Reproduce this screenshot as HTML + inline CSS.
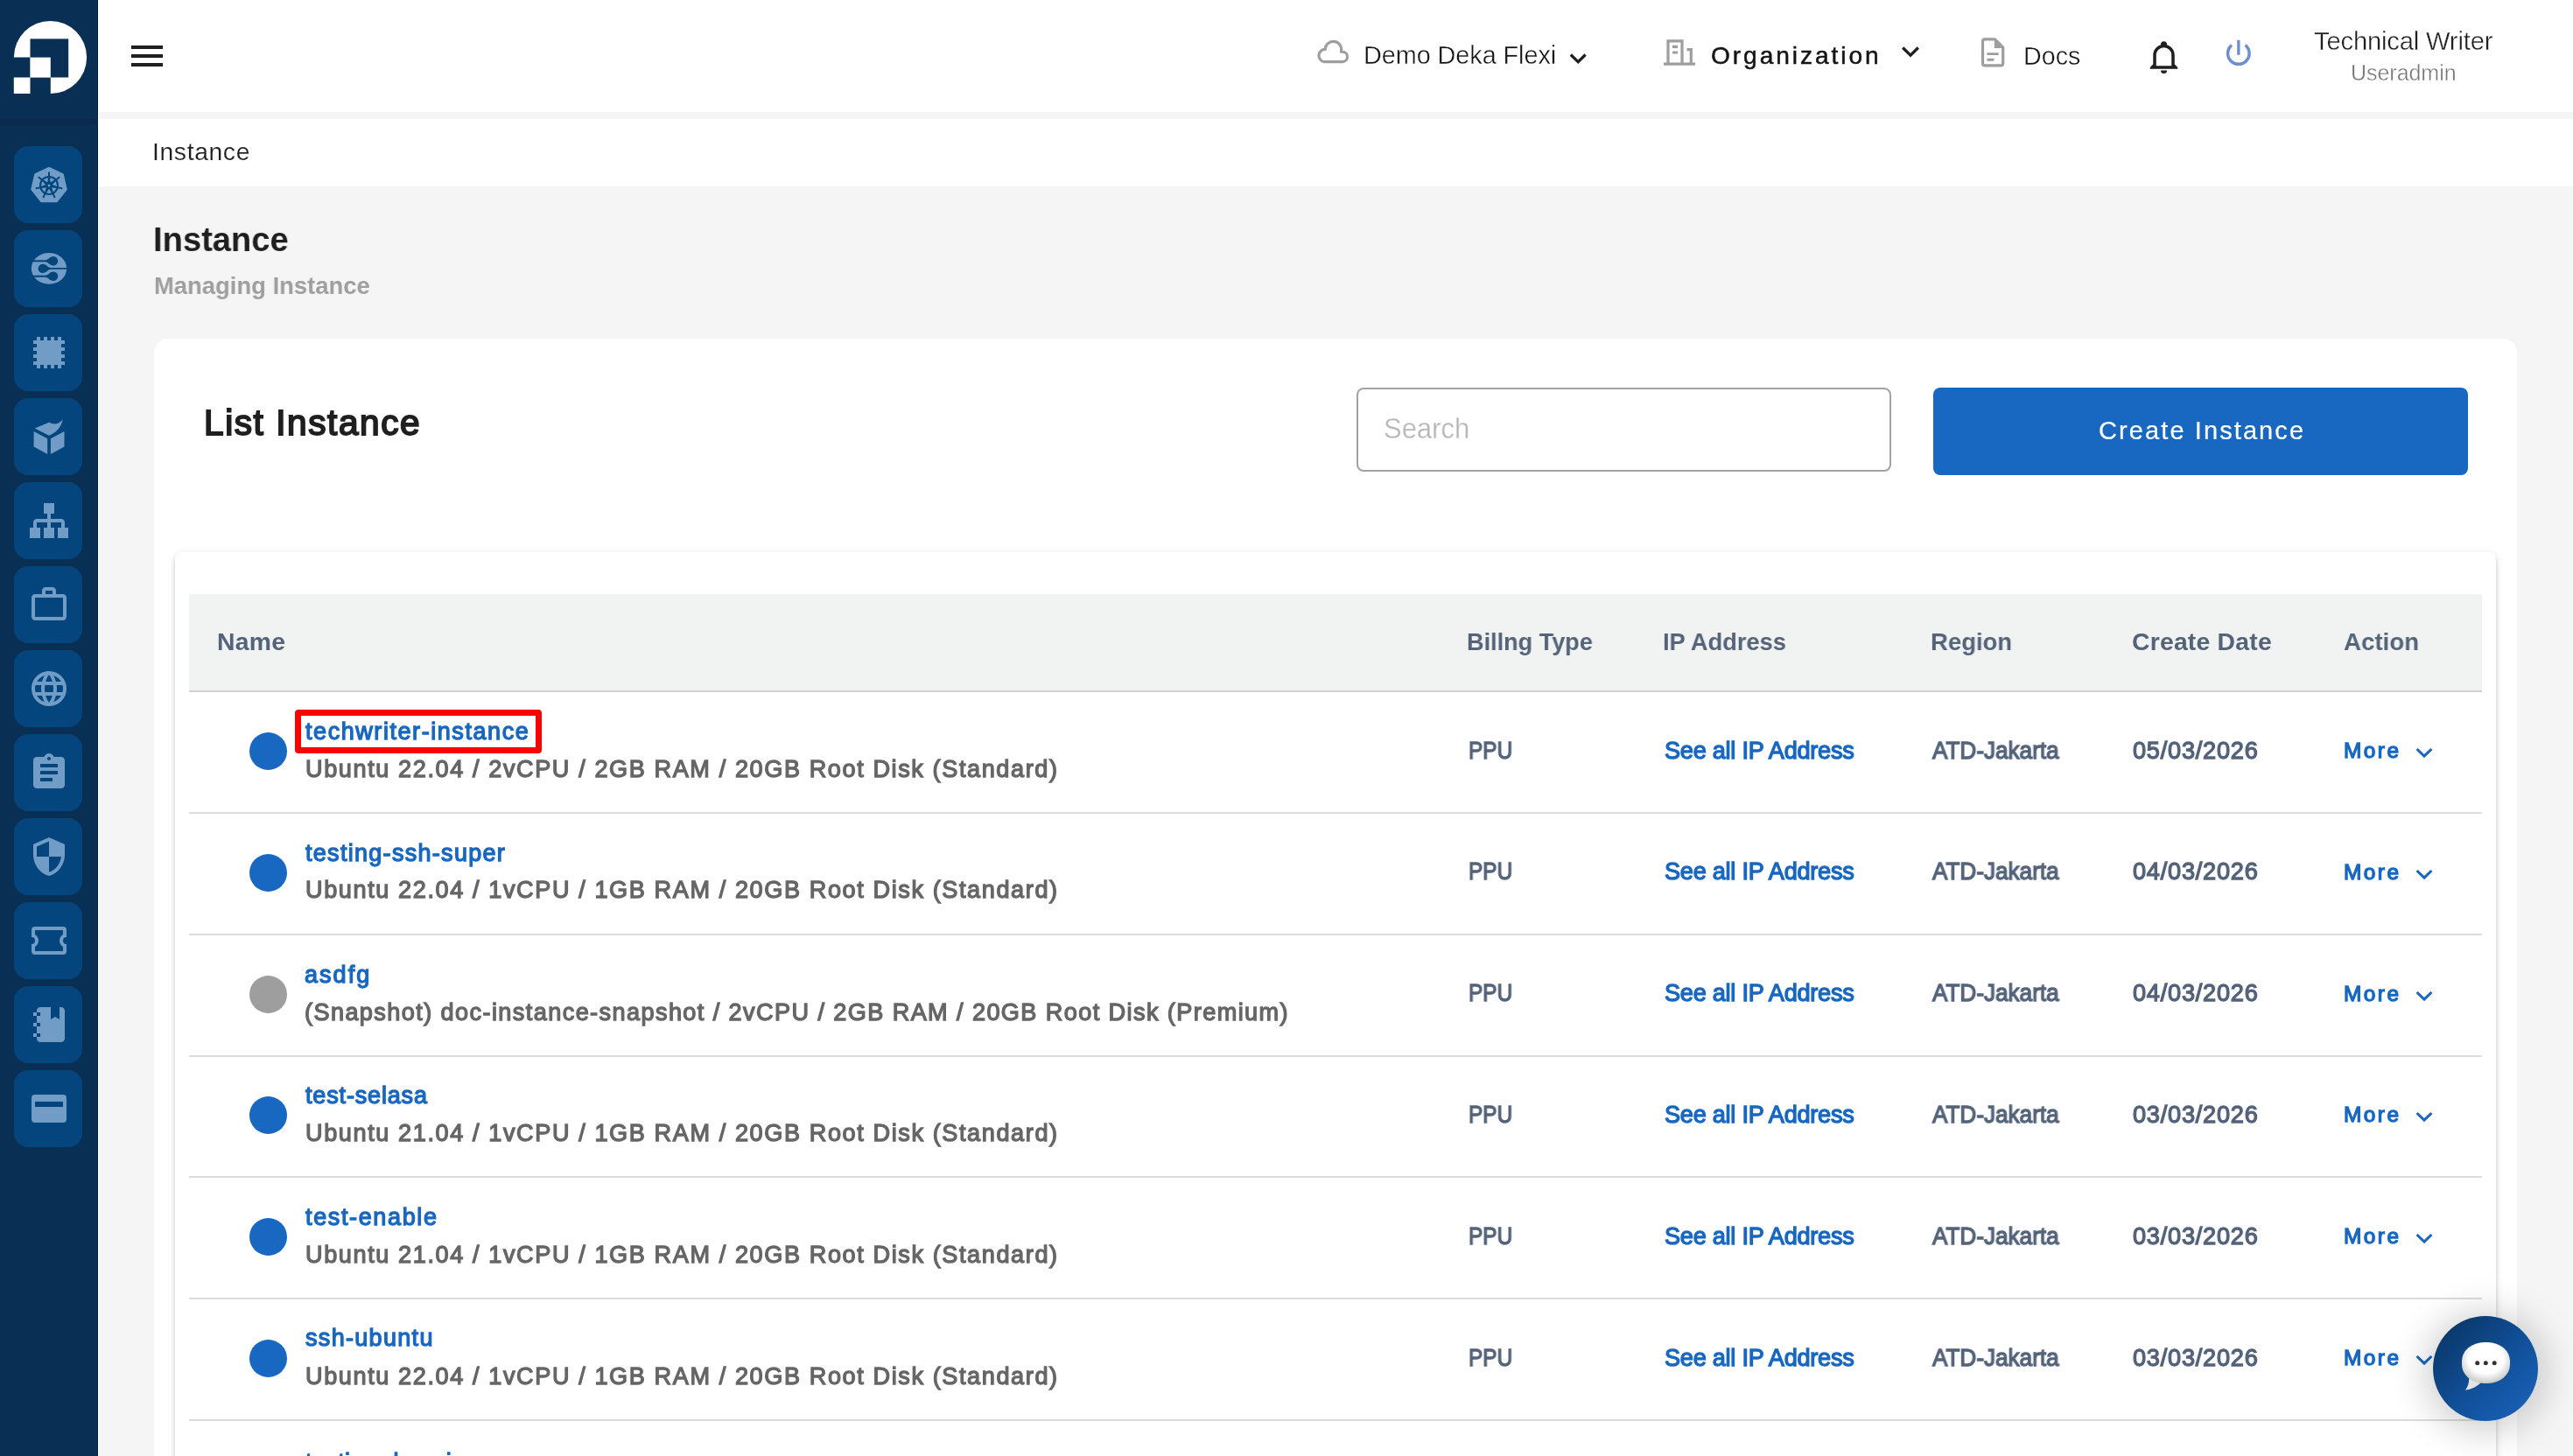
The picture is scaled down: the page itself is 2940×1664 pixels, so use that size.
<!DOCTYPE html>
<html><head><meta charset="utf-8"><title>Instance</title>
<style>
html,body{margin:0;padding:0;}
body{width:2940px;height:1664px;overflow:hidden;background:#f5f5f5;font-family:"Liberation Sans",sans-serif;position:relative;}
.t{position:absolute;white-space:nowrap;line-height:1;transform-origin:0 0;will-change:transform;}
#side{position:absolute;left:0;top:0;width:112px;height:1664px;background:#0a2f54;box-shadow:inset -2px 0 1px -1px #03203f;}
#side .shade{position:absolute;left:0;top:136px;width:112px;height:7px;background:#092a4b;}
.sb{position:absolute;left:16px;width:78px;height:88px;border-radius:16px;background:#05457e;}
#hdr{position:absolute;left:112px;top:0;width:2828px;height:128px;background:#fff;}
#bc{position:absolute;left:112px;top:136px;width:2828px;height:77px;background:#fff;}
#wl{position:absolute;left:112px;top:0;width:1px;height:1664px;background:#fff;}
#card{position:absolute;left:176px;top:387px;width:2700px;height:1400px;background:#fff;border-radius:16px;}
#inner{position:absolute;left:200px;top:631px;width:2652px;height:1200px;background:#fff;border-radius:8px;box-shadow:0 6px 2px -4px rgba(0,0,0,.2),0 4px 4px 0 rgba(0,0,0,.14),0 2px 10px 0 rgba(0,0,0,.12);}
#th{position:absolute;left:216px;top:679px;width:2620px;height:110px;background:#f1f3f2;}
#thl{position:absolute;left:216px;top:789px;width:2620px;height:2px;background:#cfd1d1;}
.rl{position:absolute;left:216px;width:2620px;height:2px;background:#dcdcdc;}
.dot{position:absolute;left:284.5px;width:43px;height:43px;border-radius:50%;}
.chev{position:absolute;}
#search{position:absolute;left:1550px;top:443px;width:607px;height:92px;border:2px solid #a3a3a3;border-radius:8px;background:#fff;}
#btn{position:absolute;left:2209px;top:443px;width:611px;height:100px;border-radius:8px;background:#1867c0;}
#red{position:absolute;left:336.5px;top:811px;width:268px;height:36px;border:7px solid #fe0000;border-radius:4px;}
#chat{position:absolute;left:2780px;top:1504px;width:120px;height:120px;border-radius:50%;background:linear-gradient(135deg,#0a3768 10%,#11509a 55%,#1a62b8 95%);box-shadow:0 4px 40px 10px rgba(0,0,0,.18);}
svg{overflow:visible}
</style></head><body>
<div id="hdr"></div><div id="bc"></div>
<div id="card"></div><div id="inner"></div><div id="th"></div><div id="thl"></div>
<div id="search"></div><div id="btn"></div>
<div class="dot" style="top:837.0px;background:#1867c0"></div>
<div class="rl" style="top:928.0px"></div>
<svg class="chev" style="left:2758px;top:851.0px" width="24" height="20" viewBox="0 0 24 20"><path d="M3.6 5 L12 13.2 L20.4 5" fill="none" stroke="#1867c0" stroke-width="3.1"/></svg>
<div class="dot" style="top:975.8px;background:#1867c0"></div>
<div class="rl" style="top:1066.8px"></div>
<svg class="chev" style="left:2758px;top:989.8px" width="24" height="20" viewBox="0 0 24 20"><path d="M3.6 5 L12 13.2 L20.4 5" fill="none" stroke="#1867c0" stroke-width="3.1"/></svg>
<div class="dot" style="top:1114.6px;background:#9e9e9e"></div>
<div class="rl" style="top:1205.6px"></div>
<svg class="chev" style="left:2758px;top:1128.6px" width="24" height="20" viewBox="0 0 24 20"><path d="M3.6 5 L12 13.2 L20.4 5" fill="none" stroke="#1867c0" stroke-width="3.1"/></svg>
<div class="dot" style="top:1253.4px;background:#1867c0"></div>
<div class="rl" style="top:1344.4px"></div>
<svg class="chev" style="left:2758px;top:1267.4px" width="24" height="20" viewBox="0 0 24 20"><path d="M3.6 5 L12 13.2 L20.4 5" fill="none" stroke="#1867c0" stroke-width="3.1"/></svg>
<div class="dot" style="top:1392.2px;background:#1867c0"></div>
<div class="rl" style="top:1483.2px"></div>
<svg class="chev" style="left:2758px;top:1406.2px" width="24" height="20" viewBox="0 0 24 20"><path d="M3.6 5 L12 13.2 L20.4 5" fill="none" stroke="#1867c0" stroke-width="3.1"/></svg>
<div class="dot" style="top:1531.0px;background:#1867c0"></div>
<div class="rl" style="top:1622.0px"></div>
<svg class="chev" style="left:2758px;top:1545.0px" width="24" height="20" viewBox="0 0 24 20"><path d="M3.6 5 L12 13.2 L20.4 5" fill="none" stroke="#1867c0" stroke-width="3.1"/></svg>
<div class="dot" style="top:1669.8px;background:#1867c0"></div>
<div class="rl" style="top:1760.8px"></div>
<svg class="chev" style="left:2758px;top:1683.8px" width="24" height="20" viewBox="0 0 24 20"><path d="M3.6 5 L12 13.2 L20.4 5" fill="none" stroke="#1867c0" stroke-width="3.1"/></svg>
<div id="red"></div>
<div class="t" style="left:1557.78px;top:49.08px;font-size:28.8px;color:#141414;letter-spacing:-0.047px;-webkit-text-stroke:0.4px #fff;">Demo Deka Flexi</div>
<div class="t" style="left:1955.25px;top:49.67px;font-size:28.1px;color:#141414;letter-spacing:2.936px;-webkit-text-stroke:0.5px #141414;">Organization</div>
<div class="t" style="left:2311.78px;top:49.79px;font-size:28.6px;color:#141414;letter-spacing:0.090px;-webkit-text-stroke:0.4px #fff;">Docs</div>
<div class="t" style="left:2644.44px;top:33.08px;font-size:29.2px;color:#1f1f1f;letter-spacing:-0.178px;-webkit-text-stroke:0.4px #fff;">Technical Writer</div>
<div class="t" style="left:2686.22px;top:70.84px;font-size:25.0px;color:#757575;letter-spacing:-0.036px;-webkit-text-stroke:0.4px #fff;">Useradmin</div>
<div class="t" style="left:173.90px;top:158.70px;font-size:28.3px;color:#1f1f1f;letter-spacing:0.631px;-webkit-text-stroke:0.15px #fff;">Instance</div>
<div class="t" style="left:175.15px;top:254.28px;font-size:39.6px;color:#1f1f1f;transform:scaleX(0.9636);font-weight:bold;">Instance</div>
<div class="t" style="left:176.23px;top:311.60px;font-size:28.3px;color:#9e9e9e;transform:scaleX(0.9686);font-weight:bold;">Managing Instance</div>
<div class="t" style="left:232.51px;top:463.27px;font-size:40.6px;color:#1f1f1f;letter-spacing:1.571px;-webkit-text-stroke:1.9px #1f1f1f;">List Instance</div>
<div class="t" style="left:1581.14px;top:472.22px;font-size:34.0px;color:#b5b5b5;transform:scaleX(0.9117);-webkit-text-stroke:0.3px #fff;">Search</div>
<div class="t" style="left:2397.76px;top:478.05px;font-size:29.0px;color:#ffffff;letter-spacing:2.094px;-webkit-text-stroke:0.2px #ffffff;">Create Instance</div>
<div class="t" style="left:247.52px;top:719.04px;font-size:28.3px;color:#54637a;letter-spacing:0.309px;font-weight:bold;">Name</div>
<div class="t" style="left:1676.12px;top:719.04px;font-size:28.3px;color:#54637a;transform:scaleX(0.9561);font-weight:bold;">Billng Type</div>
<div class="t" style="left:1900.34px;top:719.04px;font-size:28.3px;color:#54637a;transform:scaleX(0.9634);font-weight:bold;">IP Address</div>
<div class="t" style="left:2206.01px;top:719.04px;font-size:28.3px;color:#54637a;transform:scaleX(0.9713);font-weight:bold;">Region</div>
<div class="t" style="left:2436.00px;top:719.04px;font-size:28.3px;color:#54637a;letter-spacing:0.236px;font-weight:bold;">Create Date</div>
<div class="t" style="left:2677.52px;top:719.04px;font-size:28.3px;color:#54637a;transform:scaleX(0.9778);font-weight:bold;">Action</div>
<div class="t" style="left:349.35px;top:822.94px;font-size:27.0px;color:#1867c0;letter-spacing:1.563px;-webkit-text-stroke:1.3px #1867c0;">techwriter-instance</div>
<div class="t" style="left:348.67px;top:865.04px;font-size:27.1px;color:#666666;letter-spacing:1.596px;-webkit-text-stroke:1.3px #666666;">Ubuntu 22.04 / 2vCPU / 2GB RAM / 20GB Root Disk (Standard)</div>
<div class="t" style="left:1677.53px;top:844.04px;font-size:27.1px;color:#54637a;transform:scaleX(0.8998);-webkit-text-stroke:1.3px #54637a;">PPU</div>
<div class="t" style="left:1901.75px;top:844.04px;font-size:27.1px;color:#1867c0;letter-spacing:-0.242px;-webkit-text-stroke:1.3px #1867c0;">See all IP Address</div>
<div class="t" style="left:2207.99px;top:844.04px;font-size:27.1px;color:#54637a;transform:scaleX(0.9636);-webkit-text-stroke:1.3px #54637a;">ATD-Jakarta</div>
<div class="t" style="left:2436.65px;top:844.04px;font-size:27.1px;color:#54637a;letter-spacing:0.796px;-webkit-text-stroke:1.3px #54637a;">05/03/2026</div>
<div class="t" style="left:2678.43px;top:846.35px;font-size:24.4px;color:#1867c0;letter-spacing:2.492px;-webkit-text-stroke:1.3px #1867c0;">More</div>
<div class="t" style="left:348.63px;top:961.58px;font-size:27.0px;color:#1867c0;letter-spacing:1.296px;-webkit-text-stroke:1.3px #1867c0;">testing-ssh-super</div>
<div class="t" style="left:348.67px;top:1003.36px;font-size:27.1px;color:#666666;letter-spacing:1.598px;-webkit-text-stroke:1.3px #666666;">Ubuntu 22.04 / 1vCPU / 1GB RAM / 20GB Root Disk (Standard)</div>
<div class="t" style="left:1677.53px;top:982.36px;font-size:27.1px;color:#54637a;transform:scaleX(0.8998);-webkit-text-stroke:1.3px #54637a;">PPU</div>
<div class="t" style="left:1901.75px;top:982.36px;font-size:27.1px;color:#1867c0;letter-spacing:-0.242px;-webkit-text-stroke:1.3px #1867c0;">See all IP Address</div>
<div class="t" style="left:2207.99px;top:982.36px;font-size:27.1px;color:#54637a;transform:scaleX(0.9636);-webkit-text-stroke:1.3px #54637a;">ATD-Jakarta</div>
<div class="t" style="left:2436.65px;top:982.36px;font-size:27.1px;color:#54637a;letter-spacing:0.796px;-webkit-text-stroke:1.3px #54637a;">04/03/2026</div>
<div class="t" style="left:2678.43px;top:984.67px;font-size:24.4px;color:#1867c0;letter-spacing:2.492px;-webkit-text-stroke:1.3px #1867c0;">More</div>
<div class="t" style="left:348.43px;top:1100.70px;font-size:27.0px;color:#1867c0;letter-spacing:2.032px;-webkit-text-stroke:1.3px #1867c0;">asdfg</div>
<div class="t" style="left:348.07px;top:1143.36px;font-size:27.1px;color:#666666;letter-spacing:1.410px;-webkit-text-stroke:1.3px #666666;">(Snapshot) doc-instance-snapshot / 2vCPU / 2GB RAM / 20GB Root Disk (Premium)</div>
<div class="t" style="left:1677.53px;top:1121.48px;font-size:27.1px;color:#54637a;transform:scaleX(0.8998);-webkit-text-stroke:1.3px #54637a;">PPU</div>
<div class="t" style="left:1901.75px;top:1121.48px;font-size:27.1px;color:#1867c0;letter-spacing:-0.242px;-webkit-text-stroke:1.3px #1867c0;">See all IP Address</div>
<div class="t" style="left:2207.99px;top:1121.48px;font-size:27.1px;color:#54637a;transform:scaleX(0.9636);-webkit-text-stroke:1.3px #54637a;">ATD-Jakarta</div>
<div class="t" style="left:2436.65px;top:1121.48px;font-size:27.1px;color:#54637a;letter-spacing:0.796px;-webkit-text-stroke:1.3px #54637a;">04/03/2026</div>
<div class="t" style="left:2678.43px;top:1123.79px;font-size:24.4px;color:#1867c0;letter-spacing:2.492px;-webkit-text-stroke:1.3px #1867c0;">More</div>
<div class="t" style="left:348.63px;top:1239.02px;font-size:27.0px;color:#1867c0;letter-spacing:0.842px;-webkit-text-stroke:1.3px #1867c0;">test-selasa</div>
<div class="t" style="left:348.67px;top:1280.80px;font-size:27.1px;color:#666666;letter-spacing:1.598px;-webkit-text-stroke:1.3px #666666;">Ubuntu 21.04 / 1vCPU / 1GB RAM / 20GB Root Disk (Standard)</div>
<div class="t" style="left:1677.53px;top:1259.80px;font-size:27.1px;color:#54637a;transform:scaleX(0.8998);-webkit-text-stroke:1.3px #54637a;">PPU</div>
<div class="t" style="left:1901.75px;top:1259.80px;font-size:27.1px;color:#1867c0;letter-spacing:-0.242px;-webkit-text-stroke:1.3px #1867c0;">See all IP Address</div>
<div class="t" style="left:2207.99px;top:1259.80px;font-size:27.1px;color:#54637a;transform:scaleX(0.9636);-webkit-text-stroke:1.3px #54637a;">ATD-Jakarta</div>
<div class="t" style="left:2436.65px;top:1259.80px;font-size:27.1px;color:#54637a;letter-spacing:0.796px;-webkit-text-stroke:1.3px #54637a;">03/03/2026</div>
<div class="t" style="left:2678.43px;top:1262.11px;font-size:24.4px;color:#1867c0;letter-spacing:2.492px;-webkit-text-stroke:1.3px #1867c0;">More</div>
<div class="t" style="left:348.63px;top:1378.14px;font-size:27.0px;color:#1867c0;letter-spacing:1.637px;-webkit-text-stroke:1.3px #1867c0;">test-enable</div>
<div class="t" style="left:348.67px;top:1419.92px;font-size:27.1px;color:#666666;letter-spacing:1.598px;-webkit-text-stroke:1.3px #666666;">Ubuntu 21.04 / 1vCPU / 1GB RAM / 20GB Root Disk (Standard)</div>
<div class="t" style="left:1677.53px;top:1398.92px;font-size:27.1px;color:#54637a;transform:scaleX(0.8998);-webkit-text-stroke:1.3px #54637a;">PPU</div>
<div class="t" style="left:1901.75px;top:1398.92px;font-size:27.1px;color:#1867c0;letter-spacing:-0.242px;-webkit-text-stroke:1.3px #1867c0;">See all IP Address</div>
<div class="t" style="left:2207.99px;top:1398.92px;font-size:27.1px;color:#54637a;transform:scaleX(0.9636);-webkit-text-stroke:1.3px #54637a;">ATD-Jakarta</div>
<div class="t" style="left:2436.65px;top:1398.92px;font-size:27.1px;color:#54637a;letter-spacing:0.796px;-webkit-text-stroke:1.3px #54637a;">03/03/2026</div>
<div class="t" style="left:2678.43px;top:1401.23px;font-size:24.4px;color:#1867c0;letter-spacing:2.492px;-webkit-text-stroke:1.3px #1867c0;">More</div>
<div class="t" style="left:348.63px;top:1516.46px;font-size:27.0px;color:#1867c0;letter-spacing:1.314px;-webkit-text-stroke:1.3px #1867c0;">ssh-ubuntu</div>
<div class="t" style="left:348.67px;top:1559.04px;font-size:27.1px;color:#666666;letter-spacing:1.598px;-webkit-text-stroke:1.3px #666666;">Ubuntu 22.04 / 1vCPU / 1GB RAM / 20GB Root Disk (Standard)</div>
<div class="t" style="left:1677.53px;top:1538.04px;font-size:27.1px;color:#54637a;transform:scaleX(0.8998);-webkit-text-stroke:1.3px #54637a;">PPU</div>
<div class="t" style="left:1901.75px;top:1538.04px;font-size:27.1px;color:#1867c0;letter-spacing:-0.242px;-webkit-text-stroke:1.3px #1867c0;">See all IP Address</div>
<div class="t" style="left:2207.99px;top:1538.04px;font-size:27.1px;color:#54637a;transform:scaleX(0.9636);-webkit-text-stroke:1.3px #54637a;">ATD-Jakarta</div>
<div class="t" style="left:2436.65px;top:1538.04px;font-size:27.1px;color:#54637a;letter-spacing:0.796px;-webkit-text-stroke:1.3px #54637a;">03/03/2026</div>
<div class="t" style="left:2678.43px;top:1540.35px;font-size:24.4px;color:#1867c0;letter-spacing:2.492px;-webkit-text-stroke:1.3px #1867c0;">More</div>
<div class="t" style="left:349.35px;top:1657.74px;font-size:27.0px;color:#1867c0;letter-spacing:0.379px;-webkit-text-stroke:1.3px #1867c0;">testing-domain</div>
<div class="t" style="left:347.95px;top:1698.56px;font-size:27.1px;color:#666666;letter-spacing:1.594px;-webkit-text-stroke:1.3px #666666;">Ubuntu 22.04 / 1vCPU / 1GB RAM / 20GB Root Disk (Standard)</div>
<div class="t" style="left:1677.05px;top:1677.56px;font-size:27.1px;color:#54637a;transform:scaleX(0.9014);-webkit-text-stroke:1.3px #54637a;">PPU</div>
<div class="t" style="left:1902.18px;top:1677.56px;font-size:27.1px;color:#1867c0;transform:scaleX(0.9691);-webkit-text-stroke:1.3px #1867c0;">See all IP Address</div>
<div class="t" style="left:2207.75px;top:1677.56px;font-size:27.1px;color:#54637a;transform:scaleX(0.9630);-webkit-text-stroke:1.3px #54637a;">ATD-Jakarta</div>
<div class="t" style="left:2436.65px;top:1677.56px;font-size:27.1px;color:#54637a;letter-spacing:0.796px;-webkit-text-stroke:1.3px #54637a;">03/03/2026</div>
<div class="t" style="left:2678.35px;top:1679.15px;font-size:24.4px;color:#1867c0;letter-spacing:2.465px;-webkit-text-stroke:1.3px #1867c0;">More</div>
<div id="side"><div class="shade"></div>
<svg style="position:absolute;left:0;top:0" width="112" height="128" viewBox="0 0 112 128">
<defs><clipPath id="lc"><path d="M0 0H112V128H57.8V88.5H34.5V65.6H0Z"/></clipPath></defs>
<circle cx="57.5" cy="65.5" r="41.6" fill="#fff" clip-path="url(#lc)"/>
<rect x="34.5" y="44.4" width="43.7" height="44.1" fill="#0a2f54"/>
<rect x="34.5" y="65.6" width="23.3" height="22.9" fill="#fff"/>
<rect x="15.8" y="88.5" width="18.7" height="18.5" fill="#fff"/>
</svg>
<div class="sb" style="top:167px"></div>
<div class="sb" style="top:263px"></div>
<div class="sb" style="top:359px"></div>
<div class="sb" style="top:455px"></div>
<div class="sb" style="top:551px"></div>
<div class="sb" style="top:647px"></div>
<div class="sb" style="top:743px"></div>
<div class="sb" style="top:839px"></div>
<div class="sb" style="top:935px"></div>
<div class="sb" style="top:1031px"></div>
<div class="sb" style="top:1127px"></div>
<div class="sb" style="top:1223px"></div>
<svg style="position:absolute;left:32px;top:571px" width="48" height="48" viewBox="0 0 24 24"><path fill="#709cc5" d="M9,2V8H11V11H5C3.89,11 3,11.89 3,13V16H1V22H7V16H5V13H11V16H9V22H15V16H13V13H19V16H17V22H23V16H21V13C21,11.89 20.11,11 19,11H13V8H15V2H9Z"/></svg>
<svg style="position:absolute;left:32px;top:667px" width="48" height="48" viewBox="0 0 24 24"><path fill="#709cc5" d="M14 6V4h-4v2h4zM4 8v11h16V8H4zm16-2c1.11 0 2 .89 2 2v11c0 1.11-.89 2-2 2H4c-1.11 0-2-.89-2-2l.01-11c0-1.11.88-2 1.99-2h4V4c0-1.11.89-2 2-2h4c1.11 0 2 .89 2 2v2h4z"/></svg>
<svg style="position:absolute;left:32px;top:763px" width="48" height="48" viewBox="0 0 24 24"><path fill="#709cc5" d="M16.36,14C16.44,13.34 16.5,12.68 16.5,12C16.5,11.32 16.44,10.66 16.36,10H19.74C19.9,10.64 20,11.31 20,12C20,12.69 19.9,13.36 19.74,14M14.59,19.56C15.19,18.45 15.65,17.25 15.97,16H18.92C17.96,17.65 16.43,18.93 14.59,19.56M14.34,14H9.66C9.56,13.34 9.5,12.68 9.5,12C9.5,11.32 9.56,10.65 9.66,10H14.34C14.43,10.65 14.5,11.32 14.5,12C14.5,12.68 14.43,13.34 14.34,14M12,19.96C11.17,18.76 10.5,17.43 10.09,16H13.91C13.5,17.43 12.83,18.76 12,19.96M8,8H5.08C6.03,6.34 7.57,5.06 9.4,4.44C8.8,5.55 8.35,6.75 8,8M5.08,16H8C8.35,17.25 8.8,18.45 9.4,19.56C7.57,18.93 6.03,17.65 5.08,16M4.26,14C4.1,13.36 4,12.69 4,12C4,11.31 4.1,10.64 4.26,10H7.64C7.56,10.66 7.5,11.32 7.5,12C7.5,12.68 7.56,13.34 7.64,14M12,4.03C12.83,5.23 13.5,6.57 13.91,8H10.09C10.5,6.57 11.17,5.23 12,4.03M18.92,8H15.97C15.65,6.75 15.19,5.55 14.59,4.44C16.43,5.07 17.96,6.34 18.92,8M12,2C6.47,2 2,6.5 2,12A10,10 0 0,0 12,22A10,10 0 0,0 22,12A10,10 0 0,0 12,2Z"/></svg>
<svg style="position:absolute;left:32px;top:859px" width="48" height="48" viewBox="0 0 24 24"><path fill="#709cc5" d="M19 3h-4.18C14.4 1.84 13.3 1 12 1c-1.3 0-2.4.84-2.82 2H5c-1.1 0-2 .9-2 2v14c0 1.1.9 2 2 2h14c1.1 0 2-.9 2-2V5c0-1.1-.9-2-2-2zm-7 0c.55 0 1 .45 1 1s-.45 1-1 1-1-.45-1-1 .45-1 1-1zm2 14H7v-2h7v2zm3-4H7v-2h10v2zm0-4H7V7h10v2z"/></svg>
<svg style="position:absolute;left:32px;top:955px" width="48" height="48" viewBox="0 0 24 24"><path fill="#709cc5" d="M12 1L3 5v6c0 5.55 3.84 10.74 9 12 5.16-1.26 9-6.45 9-12V5l-9-4zm0 10.99h7c-.53 4.12-3.28 7.79-7 8.94V12H5V6.3l7-3.11v8.8z"/></svg>
<svg style="position:absolute;left:32px;top:1051px" width="48" height="48" viewBox="0 0 24 24"><path fill="#709cc5" d="M4,4A2,2 0 0,0 2,6V10A2,2 0 0,1 4,12A2,2 0 0,1 2,14V18A2,2 0 0,0 4,20H20A2,2 0 0,0 22,18V14A2,2 0 0,1 20,12A2,2 0 0,1 22,10V6A2,2 0 0,0 20,4H4M4,6H20V8.54C18.76,9.25 18,10.57 18,12C18,13.43 18.76,14.75 20,15.46V18H4V15.46C5.24,14.75 6,13.43 6,12C6,10.57 5.24,9.25 4,8.54V6Z"/></svg>
<svg style="position:absolute;left:32px;top:1147px" width="48" height="48" viewBox="0 0 24 24"><path fill="#709cc5" d="M3,7V5H5V4C5,2.89 5.9,2 7,2H13V9L15.5,7.5L18,9V2H19C20.05,2 21,2.95 21,4V20C21,21.05 20.05,22 19,22H7C5.95,22 5,21.05 5,20V19H3V17H5V13H3V11H5V7H3M7,11H5V13H7V11M7,7V5H5V7H7M7,19V17H5V19H7Z"/></svg>
<svg style="position:absolute;left:32px;top:1243px" width="48" height="48" viewBox="0 0 24 24"><path fill="#709cc5" d="M20 4H4A2 2 0 0 0 2 6V18A2 2 0 0 0 4 20H20A2 2 0 0 0 22 18V6A2 2 0 0 0 20 4M20 11H4V8H20Z"/></svg><svg style="position:absolute;left:0;top:0" width="112" height="600" viewBox="0 0 112 600"><polygon points="56.00,192.30 71.40,199.72 75.21,216.38 64.55,229.75 47.45,229.75 36.79,216.38 40.60,199.72" fill="#709cc5" stroke="#709cc5" stroke-width="3" stroke-linejoin="round"/>
<circle cx="56" cy="211.9" r="10" fill="none" stroke="#05457e" stroke-width="2"/>
<g fill="#05457e"><polygon points="57.90,209.90 57.00,202.90 56.95,197.10 55.05,197.10 55.00,202.90 54.10,209.90"/><circle cx="56.00" cy="197.10" r="0.95"/><polygon points="58.75,212.14 63.66,207.07 68.16,203.42 66.98,201.93 62.41,205.51 56.38,209.17"/><circle cx="67.57" cy="202.67" r="0.95"/><polygon points="57.53,214.20 64.55,214.88 70.22,216.12 70.64,214.27 65.00,212.93 58.37,210.49"/><circle cx="70.43" cy="215.19" r="0.95"/><polygon points="55.16,214.53 59.00,220.44 61.57,225.65 63.28,224.82 60.81,219.57 58.58,212.88"/><circle cx="62.42" cy="225.23" r="0.95"/><polygon points="53.42,212.88 51.19,219.57 48.72,224.82 50.43,225.65 53.00,220.44 56.84,214.53"/><circle cx="49.58" cy="225.23" r="0.95"/><polygon points="53.63,210.49 47.00,212.93 41.36,214.27 41.78,216.12 47.45,214.88 54.47,214.20"/><circle cx="41.57" cy="215.19" r="0.95"/><polygon points="55.62,209.17 49.59,205.51 45.02,201.93 43.84,203.42 48.34,207.07 53.25,212.14"/><circle cx="44.43" cy="202.67" r="0.95"/></g>
<circle cx="56" cy="211.9" r="3.3" fill="#05457e"/><circle cx="56" cy="211.9" r="1.5" fill="#709cc5"/><ellipse cx="56" cy="306.8" rx="20.2" ry="17.9" fill="#709cc5"/>
<path fill="#05457e" d="M35 297.25 H52 C55.2 297.25 56.6 293.0 61 293.0 A5.2 5.2 0 1 1 61 303.4 C56.6 303.4 55.2 299.15 52 299.15 H35 Z M77 305.95 H57.8 C54.6 305.95 53.2 301.7 48.8 301.7 A5.2 5.2 0 1 0 48.8 312.09999999999997 C53.2 312.09999999999997 54.6 307.84999999999997 57.8 307.84999999999997 H77 Z M35 314.85 H52 C55.2 314.85 56.6 310.6 61 310.6 A5.2 5.2 0 1 1 61 321.0 C56.6 321.0 55.2 316.75 52 316.75 H35 Z"/><g fill="#709cc5"><rect x="42" y="389" width="28" height="28"/><rect x="42" y="385" width="4" height="36"/><rect x="38" y="389" width="36" height="4"/><rect x="50" y="385" width="4" height="36"/><rect x="38" y="397" width="36" height="4"/><rect x="58" y="385" width="4" height="36"/><rect x="38" y="405" width="36" height="4"/><rect x="66" y="385" width="4" height="36"/><rect x="38" y="413" width="36" height="4"/></g><g fill="#709cc5"><polygon points="38.6,493.1 54.2,501.3 54.2,518.9 38.6,510.6"/>
<polygon points="57.9,501.3 73.5,493.1 73.5,510.6 57.9,518.9"/>
<path d="M39.7 489.4 L56 482.8 C60 484.6 66 486.6 71.8 479.6 C70 488 64 495 56 497.8 Z"/></g></svg>
</div>
<div id="wl"></div>
<!-- hamburger -->
<div style="position:absolute;left:150px;top:52px;width:36px;height:4px;background:#1f1f1f"></div>
<div style="position:absolute;left:150px;top:62px;width:36px;height:4px;background:#1f1f1f"></div>
<div style="position:absolute;left:150px;top:72px;width:36px;height:4px;background:#1f1f1f"></div>
<!-- header icons -->
<svg style="position:absolute;left:0;top:0" width="2940" height="128" viewBox="0 0 2940 128">
<g fill="none" stroke="#9e9e9e" stroke-width="3.1">
<path d="M1512.9 70.6 A7.15 7.15 0 0 1 1514.2 56.4 A9.25 9.25 0 1 1 1532.5 58.5 L1532.5 59.3 H1533.9 A5.65 5.65 0 0 1 1533.9 70.6 Z" stroke-linejoin="round"/>
</g>
<path d="M3.6 5 L12 13.2 L20.4 5" transform="translate(1791.2,57.5)" fill="none" stroke="#1f1f1f" stroke-width="3.2"/>
<path d="M3.6 5 L12.4 13.6 L21.2 5" transform="translate(2170.6,49.5)" fill="none" stroke="#1f1f1f" stroke-width="3.3"/>
<!-- building -->
<g fill="none" stroke="#9e9e9e" stroke-width="3.2">
<path d="M1901 73.2 H1937"/>
<path d="M1906 73 V46.8 H1922 V73"/>
<path d="M1927.5 56.6 H1932.3 V73"/>
<path d="M1911 53.4 H1917.1 M1911 60 H1917.1"/>
</g>
<!-- doc -->
<g fill="none" stroke="#9e9e9e" stroke-width="3.2" stroke-linejoin="round">
<path d="M1901 0"/>
<path d="M2279.5 44.8 H2268 Q2265.5 44.8 2265.5 47.3 V72.4 Q2265.5 74.9 2268 74.9 H2286.2 Q2288.7 74.9 2288.7 72.4 V54.2 Z"/>
<path d="M2270.5 61.6 H2283.7 M2270.5 68.3 H2278.4" stroke-width="2.9"/>
</g>
<path d="M2278.8 44 L2289.6 54.9 H2278.8 Z" fill="#9e9e9e"/>
<!-- bell -->
<g transform="translate(2451.5,43.7) scale(1.75)"><path fill="#1f1f1f" d="M10,21H14A2,2 0 0,1 12,23A2,2 0 0,1 10,21M21,19V20H3V19L5,17V11C5,7.9 7.03,5.17 10,4.29C10,4.19 10,4.1 10,4A2,2 0 0,1 12,2A2,2 0 0,1 14,4C14,4.1 14,4.19 14,4.29C16.97,5.17 19,7.9 19,11V17L21,19M17,11A5,5 0 0,0 12,6A5,5 0 0,0 7,11V18H17V11Z"/></g>
<!-- power -->
<g fill="none" stroke="#6c8fd0" stroke-width="3.5">
<path d="M2557.85 45.8 V62.8" stroke-width="3.3"/>
<path d="M2550.05 51.65 A12.25 12.25 0 1 0 2565.65 51.65"/>
</g>
</svg>
<!-- chat -->
<div id="chat"></div>
<svg style="position:absolute;left:2780px;top:1504px" width="120" height="120" viewBox="0 0 120 120">
<defs><radialGradient id="bg" cx="50%" cy="40%" r="60%"><stop offset="0.6" stop-color="#fff"/><stop offset="1" stop-color="#c9c9c9"/></radialGradient></defs>
<path d="M41 66 C42 75 40 81 37 84.5 C45 84 51 80 56 75 Z" fill="#e2e2e2"/>
<rect x="33" y="30" width="55" height="47" rx="25.5" ry="21.5" fill="url(#bg)"/>
<circle cx="50.7" cy="53.8" r="2.5" fill="#333"/><circle cx="60.3" cy="53.8" r="2.5" fill="#333"/><circle cx="70.2" cy="53.8" r="2.5" fill="#333"/>
</svg>
</body></html>
